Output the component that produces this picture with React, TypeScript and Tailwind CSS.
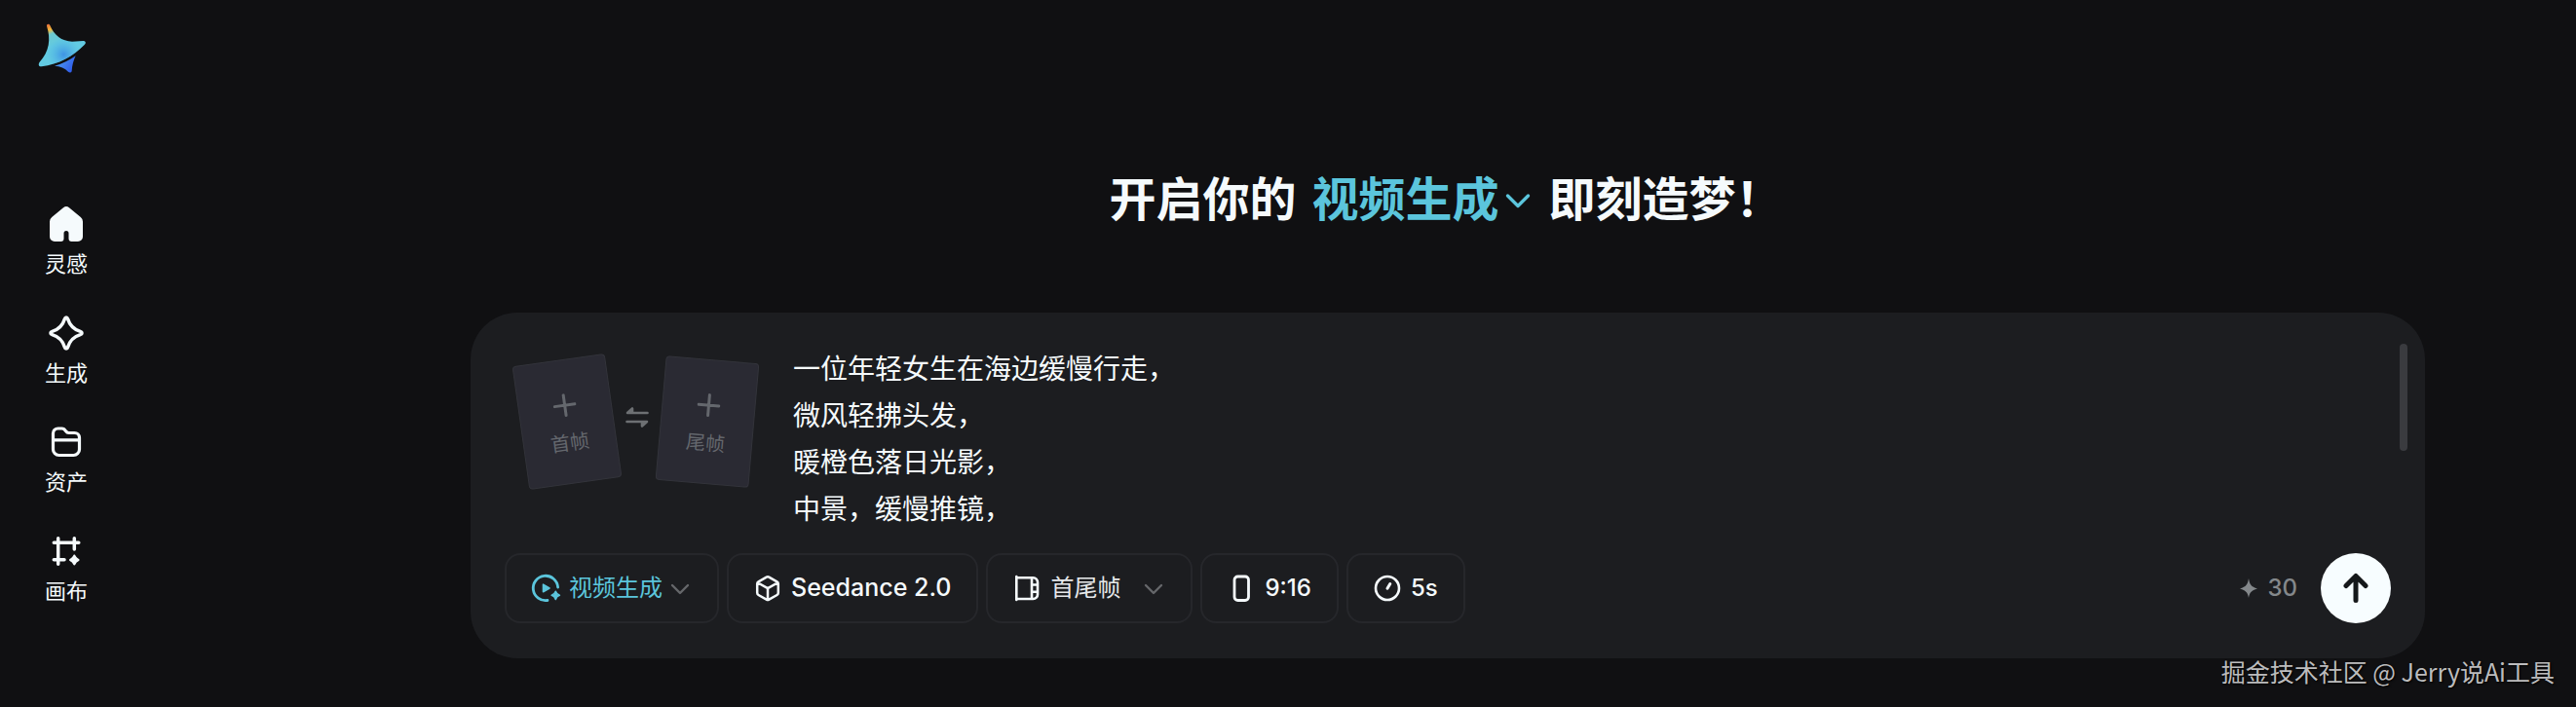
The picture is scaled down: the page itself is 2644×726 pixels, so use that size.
import { useState } from 'react';
import type { ReactNode } from 'react';
import clsx from 'clsx';

const PROMPT = ['一位年轻女生在海边缓慢行走，', '微风轻拂头发，', '暖橙色落日光影，', '中景，缓慢推镜，'].join('\n');

const NAV: { label: string; icon: ReactNode }[] = [
  { label: '灵感', icon: <HomeIcon /> },
  { label: '生成', icon: <SparkleIcon /> },
  { label: '资产', icon: <FolderIcon /> },
  { label: '画布', icon: <CanvasIcon /> },
];

export default function App() {
  const [prompt, setPrompt] = useState(PROMPT);

  return (
    <div className="relative flex min-h-screen bg-[#101012] font-['Inter','Noto_Sans_CJK_SC',sans-serif] text-[#f5fafc]">
      <aside className="flex w-34 shrink-0 flex-col items-center pt-6">
        <a href="#" aria-label="首页" className="pr-2">
          <Logo />
        </a>
        <nav className="mt-[134px] flex flex-col gap-[35px]">
          {NAV.map((item) => (
            <a key={item.label} href="#" className="flex flex-col items-center gap-[5px]">
              {item.icon}
              <span className="text-[22px] leading-8">{item.label}</span>
            </a>
          ))}
        </nav>
      </aside>

      <main className="flex flex-1 flex-col items-center pb-12 pl-48 pt-[169px]">
        <h1 className="mb-20 flex items-center pr-1 text-5xl font-bold leading-[72px]">
          <span>开启你的</span>
          <label className="ml-4 flex items-center text-[#5bc5dc]">
            <select aria-label="创作类型" className="appearance-none bg-transparent leading-[72px] outline-none">
              <option>视频生成</option>
              <option>图片生成</option>
            </select>
            <svg viewBox="0 0 28 28" className="pointer-events-none ml-1 size-7" fill="none" stroke="currentColor" strokeWidth="3.4" strokeLinecap="round" strokeLinejoin="round">
              <path d="M3.5 10 14 20.5 24.5 10" />
            </svg>
          </label>
          <span className="ml-[18px]">即刻造梦！</span>
        </h1>

        <section className="w-full max-w-[2006px] rounded-[48px] bg-[#1c1d20] pb-9 pt-8">
          <div className="flex items-start pl-[51px] pr-[18px]">
            <div className="flex items-center pt-4">
              <FrameCard label="首帧" className="-rotate-8" />
              <button type="button" aria-label="交换首尾帧" className="flex w-12 justify-center pb-3 text-[#6d7073]">
                <svg viewBox="0 0 24 24" className="size-6" fill="none" stroke="currentColor" strokeWidth="2.6" strokeLinecap="round" strokeLinejoin="round">
                  <path d="M22.5 9H2L7 4.5V8" />
                  <path d="M1.5 18H22L17 22.5V19" />
                </svg>
              </button>
              <FrameCard label="尾帧" className="rotate-5" />
            </div>
            <textarea
              aria-label="提示词"
              value={prompt}
              onChange={(e) => setPrompt(e.target.value)}
              className="ml-10 h-48 flex-1 resize-none overflow-hidden bg-transparent pt-0.5 text-[28px] leading-[48px] outline-none"
            />
            <div className="h-[110px] w-2 rounded-full bg-[#3a3b3f]" />
          </div>

          <div className="mt-[23px] flex items-center gap-2 px-[35px]">
            <ToolSelect icon={<VideoIcon />} options={['视频生成', '图片生成']} className="text-[#5bc5dc]" chevronClassName="ml-1.5" />
            <ToolButton icon={<CubeIcon />} label="Seedance 2.0" className="text-[25px]" />
            <ToolSelect icon={<FramesIcon />} options={['首尾帧']} className="text-[#e6e8ea]" chevronClassName="ml-[22px]" />
            <ToolButton icon={<RatioIcon />} label="9:16" className="text-2xl" />
            <ToolButton icon={<TimerIcon />} label="5s" className="text-2xl" />

            <div className="ml-auto flex items-center gap-2.5 text-2xl font-medium text-[#84888b]">
              <svg viewBox="0 0 18 20" className="h-5 w-[18px]" fill="currentColor">
                <path d="M9 0C10 6 11.5 8.5 18 10.5 11.5 12.5 10 14.5 9 20 8 14.5 6.5 12.5 0 10.5 6.5 8.5 8 6 9 0Z" />
              </svg>
              30
            </div>
            <button type="button" aria-label="发送" className="ml-4 grid size-18 place-items-center rounded-full bg-[#f7fdff] text-[#15181a]">
              <svg viewBox="0 0 32 32" className="size-8" fill="none" stroke="currentColor" strokeWidth="5" strokeLinecap="round" strokeLinejoin="round">
                <path d="M16 28.5V3.5M6 13.5 16 3.5l10 10" />
              </svg>
            </button>
          </div>
        </section>
      </main>

      <p className="absolute bottom-[19px] right-[22px] font-['Noto_Sans_CJK_SC',sans-serif] text-[25px] leading-9 text-[#bcbcbd] [text-shadow:1px_1px_2px_#000]">
        掘金技术社区 @ Jerry说Ai工具
      </p>
    </div>
  );
}

function FrameCard({ label, className }: { label: string; className: string }) {
  return (
    <button
      type="button"
      className={clsx(
        'flex h-32 w-24 flex-col items-center justify-center gap-[11px] rounded-sm border border-[#33343b] bg-[#2a2a33] pt-2 text-[#64676d]',
        className,
      )}
    >
      <svg viewBox="0 0 24 24" className="size-6" fill="none" stroke="currentColor" strokeWidth="3" strokeLinecap="round">
        <path d="M12 1.5v21M1.5 12h21" />
      </svg>
      <span className="text-xl leading-8">{label}</span>
    </button>
  );
}

const TOOL = 'flex h-18 items-center rounded-2xl border-2 border-[#26272b] px-[26px]';

function ToolButton({ icon, label, className }: { icon: ReactNode; label: string; className: string }) {
  return (
    <button type="button" className={clsx(TOOL, 'gap-2.5 font-medium', className)}>
      {icon}
      {label}
    </button>
  );
}

interface ToolSelectProps {
  icon: ReactNode;
  options: string[];
  className: string;
  chevronClassName: string;
}

function ToolSelect({ icon, options, className, chevronClassName }: ToolSelectProps) {
  return (
    <label className={clsx(TOOL, 'text-2xl', className)}>
      {icon}
      <select aria-label={options[0]} className="ml-2.5 appearance-none bg-transparent outline-none">
        {options.map((o) => (
          <option key={o}>{o}</option>
        ))}
      </select>
      <svg
        viewBox="0 0 24 24"
        className={clsx('pointer-events-none size-6 text-[#65676a]', chevronClassName)}
        fill="none"
        stroke="currentColor"
        strokeWidth="2.4"
        strokeLinecap="round"
        strokeLinejoin="round"
      >
        <path d="M4 9l8 8 8-8" />
      </svg>
    </label>
  );
}

function Logo() {
  const sail = 'M144 80C143 74 151 72 154 78 166 108 190 127 222 128L256 126C264 126 266 133 260 138 225 174 180 198 128 205 119 206 117 198 122 191 152 158 157 120 144 80Z';
  return (
    <svg viewBox="117 72 150 156" className="h-13 w-[50px]">
      <defs>
        <linearGradient id="tip" x1="146" y1="76" x2="172" y2="140" gradientUnits="userSpaceOnUse">
          <stop offset="0" stopColor="#e8703a" />
          <stop offset="0.25" stopColor="#f2b93c" />
          <stop offset="0.45" stopColor="#6cc9d0" />
          <stop offset="1" stopColor="#62cbe2" />
        </linearGradient>
        <radialGradient id="glow" cx="196" cy="168" r="52" gradientUnits="userSpaceOnUse">
          <stop offset="0" stopColor="#3f93e6" />
          <stop offset="1" stopColor="#4fb4e4" stopOpacity="0" />
        </radialGradient>
        <linearGradient id="tail" x1="175" y1="195" x2="220" y2="222" gradientUnits="userSpaceOnUse">
          <stop offset="0" stopColor="#4b97f0" />
          <stop offset="1" stopColor="#2f5bea" />
        </linearGradient>
      </defs>
      <path fill="url(#tip)" d={sail} />
      <path fill="url(#glow)" d={sail} />
      <path fill="url(#tail)" d="M168 203C193 196 214 186 233 172 226 187 222 202 221 219 220 224 214 225 210 221 200 210 186 204 168 203Z" />
    </svg>
  );
}

function HomeIcon() {
  return (
    <svg viewBox="0 0 40 40" className="size-10" fill="currentColor">
      <path d="M17 3.2a4.8 4.8 0 0 1 6 0l11.8 9.8a6 6 0 0 1 2.2 4.6V33a5 5 0 0 1-5 5h-6.5a3 3 0 0 1-3-3v-5.5a2.5 2.5 0 0 0-5 0V35a3 3 0 0 1-3 3H8a5 5 0 0 1-5-5V17.6A6 6 0 0 1 5.200 13Z" />
    </svg>
  );
}

function SparkleIcon() {
  return (
    <svg viewBox="0 0 40 40" className="size-10" fill="none" stroke="currentColor" strokeWidth="3.5" strokeLinejoin="round">
      <path d="M20 4c.8 0 1.3.6 1.6 1.5C23.4 11.5 28.5 16.6 34.5 18.4c2.1.6 2.1 2.6 0 3.2C28.5 23.4 23.4 28.5 21.6 34.5c-.6 2.1-2.6 2.1-3.2 0C16.6 28.5 11.5 23.4 5.5 21.6c-2.1-.6-2.1-2.6 0-3.2C11.5 16.6 16.6 11.5 18.4 5.5 18.7 4.6 19.2 4 20 4Z" />
    </svg>
  );
}

function FolderIcon() {
  return (
    <svg viewBox="0 0 40 40" className="size-10" fill="none" stroke="currentColor" strokeWidth="3.2" strokeLinejoin="round">
      <path d="M6.5 11v16.5a6 6 0 0 0 6 6h15a6 6 0 0 0 6-6V15.5a5 5 0 0 0-5-5h-6c-1.5 0-2.2-.6-3-1.8C18.5 7 17.5 6 15.5 6h-4a5 5 0 0 0-5 5ZM6.5 17.8h27" />
    </svg>
  );
}

function CanvasIcon() {
  return (
    <svg viewBox="0 0 40 40" className="size-10" fill="none" stroke="currentColor" strokeWidth="3.5" strokeLinecap="round">
      <path d="M11.7 6.8v26.5M7.3 11.3h25.5M28.3 6.8V18M7.3 28.7H18" />
      <path fill="currentColor" stroke="none" d="M28.3 23.5c.6 0 .9.5 1.2 1 .8 1.6 1.5 2.3 3.1 3.2 1.3.7 1.3 1.9 0 2.6-1.6.9-2.3 1.6-3.1 3.2-.6 1.3-1.8 1.3-2.4 0-.8-1.6-1.5-2.3-3.1-3.2-1.3-.7-1.3-1.9 0-2.6 1.6-.9 2.3-1.6 3.1-3.2.3-.5.6-1 1.2-1Z" />
    </svg>
  );
}

function VideoIcon() {
  return (
    <svg viewBox="0 0 28 28" className="size-7 overflow-visible" fill="none" stroke="currentColor" strokeWidth="2.8" strokeLinecap="round">
      <path d="M26.6 13A12.7 12.7 0 1 0 16 26.5" />
      <path fill="currentColor" strokeWidth="1.6" strokeLinejoin="round" d="M11.5 10.2v7.6l6.5-3.8Z" />
      <path fill="currentColor" strokeWidth="1.6" strokeLinejoin="round" d="M24.3 17.2c.8 2.4 1.7 3.3 4.1 4.1-2.4.8-3.3 1.7-4.1 4.1-.8-2.4-1.7-3.3-4.1-4.1 2.4-.8 3.3-1.7 4.1-4.1Z" />
    </svg>
  );
}

function CubeIcon() {
  return (
    <svg viewBox="0 0 28 28" className="size-7" fill="none" stroke="currentColor" strokeWidth="2.5" strokeLinecap="round" strokeLinejoin="round">
      <path d="M12.7 2.7a2.6 2.6 0 0 1 2.6 0l8.2 4.6a2.6 2.6 0 0 1 1.3 2.2v9.3a2.6 2.6 0 0 1-1.3 2.2l-8.2 4.6a2.6 2.6 0 0 1-2.6 0l-8.2-4.6a2.6 2.6 0 0 1-1.3-2.2V9.5a2.6 2.6 0 0 1 1.3-2.2ZM4 8.5l10 5.7 10-5.7M14 14.2v11.5" />
    </svg>
  );
}

function FramesIcon() {
  return (
    <svg viewBox="0 0 28 28" className="size-7" fill="none" stroke="#f5fafc" strokeWidth="2.6" strokeLinecap="round">
      <path d="M3.3 2v24M3.3 3.3h17.2a4.5 4.5 0 0 1 4.5 4.5v12.7a4.5 4.5 0 0 1-4.5 4.5H3.3M19 3.3V25M19 10.500H25M19 17.8H25" />
    </svg>
  );
}

function RatioIcon() {
  return (
    <svg viewBox="0 0 28 28" className="size-7" fill="none" stroke="currentColor" strokeWidth="2.8">
      <rect x="7" y="2" width="14.5" height="24.5" rx="3.5" />
    </svg>
  );
}

function TimerIcon() {
  return (
    <svg viewBox="0 0 28 28" className="size-7" fill="none" stroke="currentColor" strokeWidth="2.6" strokeLinecap="round">
      <circle cx="14" cy="14" r="12" />
      <path strokeWidth="3" d="M14 14.3 16.8 9.5" />
    </svg>
  );
}
